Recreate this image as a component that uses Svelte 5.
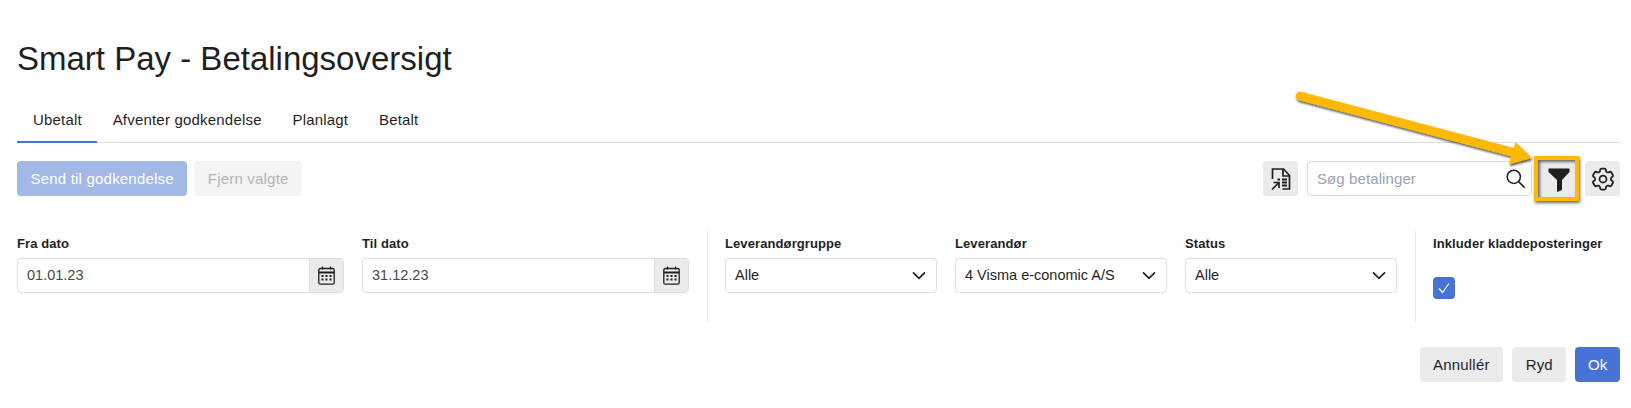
<script>
    const tabs = ['Ubetalt', 'Afventer godkendelse', 'Planlagt', 'Betalt'];
    const dates = [
        { label: 'Fra dato', value: '01.01.23' },
        { label: 'Til dato', value: '31.12.23' },
    ];
    const selects = [
        { label: 'Leverandørgruppe', value: 'Alle' },
        { label: 'Leverandør', value: '4 Visma e-conomic A/S' },
        { label: 'Status', value: 'Alle' },
    ];
</script>

<div class="page">
    <h1>Smart Pay - Betalingsoversigt</h1>

    <nav class="tabs">
        {#each tabs as tab, i}
            <span class="tab" class:active={i === 0}>{tab}</span>
        {/each}
    </nav>

    <div class="toolbar">
        <button class="btn primary disabled">Send til godkendelse</button>
        <button class="btn muted">Fjern valgte</button>
        <div class="spacer"></div>
        <button class="icon-btn" aria-label="Eksporter">
            <svg width="24" height="24" viewBox="0 0 24 24" fill="none" stroke="#1f1f1f" stroke-width="1.7">
                <path d="M3.500 12V2h11l6 6.500V22h-7" />
                <path d="M14 2v7h6.500" />
                <path d="M3 22.500l6.500-6.500M4.500 15.500h5.500V21" />
                <path d="M8.500 12.500h2.500M13 12.500h5M13 15.500h5M13 18.500h5" stroke-width="1.900" />
            </svg>
        </button>
        <div class="search">
            <span class="placeholder">Søg betalinger</span>
            <svg width="21" height="21" viewBox="0 0 21 21" fill="none" stroke="#1f1f1f" stroke-width="1.5">
                <circle cx="8.800" cy="8.800" r="6.600" />
                <path d="M13.600 13.600l6 6" />
            </svg>
        </div>
        <div class="filter-mark">
            <button class="icon-btn filter" aria-label="Filter">
                <svg width="22" height="24" viewBox="0 0 22 24" fill="#1f1f1f">
                    <path d="M.5 .5h21v3.500l-7.500 8v10l-5 2v-12l-8.500-8z" />
                </svg>
            </button>
        </div>
        <button class="icon-btn" aria-label="Indstillinger">
            <svg width="28" height="28" viewBox="0 0 24 24" fill="none" stroke="#1f1f1f" stroke-width="1.500" stroke-linejoin="round">
                <path d="M9.594 3.940c.09-.542.56-.94 1.110-.94h2.593c.55 0 1.020.398 1.110.94l.213 1.281c.063.374.313.686.645.870.074.040.147.083.22.127.325.196.72.257 1.075.124l1.217-.456a1.125 1.125 0 0 1 1.370.49l1.296 2.247a1.125 1.125 0 0 1-.26 1.431l-1.003.827c-.293.241-.438.613-.43.992a7.723 7.723 0 0 1 0 .255c-.008.378.137.75.43.991l1.004.827c.424.35.534.955.26 1.430l-1.298 2.247a1.125 1.125 0 0 1-1.369.491l-1.217-.456c-.355-.133-.75-.072-1.076.124a6.470 6.470 0 0 1-.22.128c-.331.183-.581.495-.644.869l-.213 1.281c-.09.543-.56.94-1.110.94h-2.594c-.55 0-1.019-.398-1.110-.94l-.213-1.281c-.062-.374-.312-.686-.644-.87a6.520 6.520 0 0 1-.22-.127c-.325-.196-.72-.257-1.076-.124l-1.217.456a1.125 1.125 0 0 1-1.369-.49l-1.297-2.247a1.125 1.125 0 0 1 .26-1.431l1.004-.827c.292-.24.437-.613.43-.991a6.932 6.932 0 0 1 0-.255c.007-.38-.138-.751-.43-.992l-1.004-.827a1.125 1.125 0 0 1-.26-1.430l1.297-2.247a1.125 1.125 0 0 1 1.370-.491l1.216.456c.356.133.751.072 1.076-.124.072-.044.146-.086.22-.128.332-.183.582-.495.644-.869l.214-1.280z" />
                <circle cx="12" cy="12" r="3" />
            </svg>
        </button>
    </div>

    <div class="filters">
        <section class="group dates">
            {#each dates as d}
                <div class="field">
                    <span class="label">{d.label}</span>
                    <div class="date-input">
                        <span class="value">{d.value}</span>
                        <span class="addon">
                            <svg width="17" height="19" viewBox="0 0 17 19" fill="none" stroke="#1f1f1f" stroke-width="1.300">
                                <rect x=".8" y="2.500" width="15.400" height="15.700" rx="1.500" />
                                <path d="M.8 6.500h15.400" stroke-width="2" />
                                <path d="M4.500 .5v3M12.500 .5v3" />
                                <path d="M3.500 10h2M7.500 10h2M11.500 10h2M3.500 13.500h2M7.500 13.500h2M11.500 13.500h2" stroke-width="1.800" />
                            </svg>
                        </span>
                    </div>
                </div>
            {/each}
        </section>

        <section class="group selects">
            {#each selects as s}
                <div class="field">
                    <span class="label">{s.label}</span>
                    <div class="select">
                        <span class="value dark">{s.value}</span>
                        <svg width="14" height="9" viewBox="0 0 14 9" fill="none" stroke="#1f1f1f" stroke-width="1.700">
                            <path d="M1 1.300l6 6 6-6" />
                        </svg>
                    </div>
                </div>
            {/each}
        </section>

        <section class="group draft">
            <span class="label">Inkluder kladdeposteringer</span>
            <span class="checkbox">
                <svg width="14" height="14" viewBox="0 0 14 14" fill="none" stroke="#fff" stroke-width="1.200">
                    <path d="M2 7.500l3.500 4L12 2.500" />
                </svg>
            </span>
        </section>
    </div>

    <div class="actions">
        <button class="btn plain">Annullér</button>
        <button class="btn plain">Ryd</button>
        <button class="btn primary ok">Ok</button>
    </div>

    <!-- annotation arrow lying over the screenshot -->
    <svg class="arrow" width="1631" height="408" viewBox="0 0 1631 408" fill="none">
        <defs>
            <filter id="arrow-shadow" x="-10%" y="-30%" width="120%" height="170%">
                <feDropShadow dx="1" dy="2" stdDeviation="1.200" flood-color="#000" flood-opacity=".65" />
            </filter>
        </defs>
        <g filter="url(#arrow-shadow)">
            <path d="M1300 96L1512 152" stroke="#ffb900" stroke-width="9" stroke-linecap="round" />
            <path d="M1516 144L1530 157.500L1510 163z" fill="#ffb900" stroke="#ffb900" stroke-width="2" stroke-linejoin="round" />
        </g>
    </svg>
</div>

<style>
    :global(body) {
        margin: 0;
        background: #fff;
    }
    .page {
        position: relative;
        box-sizing: border-box;
        width: 1631px;
        height: 408px;
        padding: 0 11px 0 17px;
        overflow: hidden;
        font-family: "Liberation Sans", Arial, sans-serif;
        color: #1f1f1f;
    }
    h1 {
        margin: 0;
        padding-top: 38px;
        font-size: 33px;
        line-height: 42px;
        font-weight: 400;
    }
    .tabs {
        display: flex;
        margin-top: 20px;
        height: 42px;
        border-bottom: 1px solid #dedede;
    }
    .tab {
        box-sizing: border-box;
        height: 43px;
        padding: 0 14.700px 0 16px;
        font-size: 15px;
        letter-spacing: .2px;
        line-height: 39px;
    }
    .tab.active {
        border-bottom: 2px solid #4673d5;
    }
    .toolbar {
        display: flex;
        align-items: center;
        height: 35px;
        margin-top: 18px;
    }
    .spacer {
        flex: 1;
    }
    .btn {
        box-sizing: border-box;
        height: 35px;
        padding: 0 13.500px;
        border: 0;
        border-radius: 4px;
        font-family: inherit;
        font-size: 15px;
        letter-spacing: .2px;
    }
    .primary {
        background: #4673d5;
        color: #fff;
    }
    .primary.disabled {
        background: #a2b9e8;
    }
    .ok {
        padding: 0 12.500px;
    }
    .muted {
        margin-left: 7px;
        background: #f4f4f4;
        color: #b4b4b4;
    }
    .plain {
        background: #ebebeb;
        color: #1f1f1f;
    }
    .icon-btn {
        display: flex;
        align-items: center;
        justify-content: center;
        box-sizing: border-box;
        width: 35px;
        height: 35px;
        padding: 0;
        border: 0;
        border-radius: 4px;
        background: #ebebeb;
    }
    .search {
        display: flex;
        align-items: center;
        justify-content: space-between;
        box-sizing: border-box;
        width: 225px;
        height: 35px;
        margin-left: 9px;
        padding: 0 5px 0 9px;
        border: 1px solid #dedede;
        border-radius: 4px;
    }
    .placeholder {
        font-size: 15px;
        letter-spacing: .1px;
        color: #9aa3b2;
    }
    .filter-mark {
        box-sizing: border-box;
        width: 45px;
        height: 45px;
        margin: 0 6px 0 2px;
        border: 4px solid #ffb900;
        box-shadow: 1px 2px 3px rgba(0, 0, 0, .6);
    }
    .filter {
        width: 37px;
        height: 37px;
        padding: 2px 0 0 4px;
        border-radius: 0;
        box-shadow: inset 2px 2px 3px rgba(0, 0, 0, .55);
    }
    .filters {
        display: flex;
        margin-top: 35px;
        height: 91px;
    }
    .group {
        box-sizing: border-box;
    }
    .dates {
        display: flex;
        gap: 18px;
        width: 691px;
        border-right: 1px solid #e6e6e6;
    }
    .dates .field {
        width: 327px;
    }
    .selects {
        display: flex;
        gap: 18px;
        width: 708px;
        padding-left: 17px;
        border-right: 1px solid #e6e6e6;
    }
    .selects .field {
        width: 212px;
    }
    .draft {
        padding-left: 17px;
    }
    .field {
        display: flex;
        flex-direction: column;
    }
    .label {
        display: block;
        height: 27px;
        font-size: 13px;
        letter-spacing: .1px;
        line-height: 26px;
        font-weight: 700;
    }
    .date-input, .select {
        display: flex;
        align-items: center;
        box-sizing: border-box;
        height: 35px;
        border: 1px solid #dedede;
        border-radius: 4px;
    }
    .value {
        flex: 1;
        padding: 0 0 2px 9px;
        font-size: 14.500px;
        color: #494949;
    }
    .value.dark {
        color: #1f1f1f;
    }
    .addon {
        display: flex;
        align-items: center;
        justify-content: center;
        width: 33px;
        height: 100%;
        background: #ebebeb;
        border-left: 1px solid #dedede;
        border-radius: 0 3px 3px 0;
    }
    .select svg {
        margin-right: 10px;
    }
    .checkbox {
        display: flex;
        align-items: center;
        justify-content: center;
        width: 22px;
        height: 22px;
        margin-top: 19px;
        background: #4673d5;
        border-radius: 4px;
    }
    .actions {
        display: flex;
        justify-content: flex-end;
        gap: 9px;
        margin-top: 25px;
    }
    .arrow {
        position: absolute;
        left: 0;
        top: 0;
        pointer-events: none;
    }
</style>
